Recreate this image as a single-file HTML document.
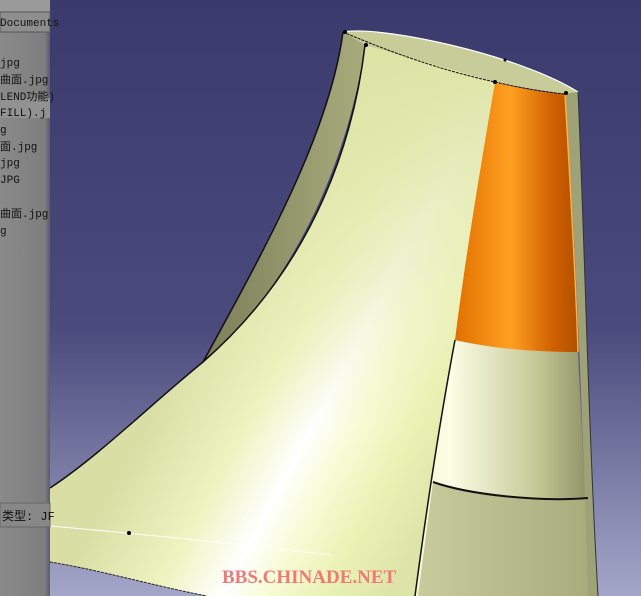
<!DOCTYPE html>
<html><head><meta charset="utf-8"><style>
html,body{margin:0;padding:0;width:641px;height:596px;overflow:hidden;background:#3c3c70}
.t{font-family:"Liberation Mono","WenQuanYi Zen Hei",monospace;font-size:11px;fill:#111}
</style></head><body>
<svg width="641" height="596" viewBox="0 0 641 596" xmlns="http://www.w3.org/2000/svg">
<defs>
<linearGradient id="bg" x1="0" y1="0" x2="0" y2="1">
<stop offset="0" stop-color="#3a3a6c"/><stop offset="0.55" stop-color="#4a4a7c"/><stop offset="1" stop-color="#a4a6c8"/></linearGradient>
<linearGradient id="front" gradientUnits="userSpaceOnUse" x1="160" y1="400" x2="420" y2="540">
<stop offset="0" stop-color="#d8dea4"/><stop offset="0.3" stop-color="#eef4c0"/><stop offset="0.5" stop-color="#ffffff"/><stop offset="0.62" stop-color="#f8fcd8"/><stop offset="0.8" stop-color="#eaf2b4"/><stop offset="1" stop-color="#dde4a8"/></linearGradient>
<linearGradient id="fade" gradientUnits="userSpaceOnUse" x1="0" y1="60" x2="0" y2="430">
<stop offset="0" stop-color="#dde4a6" stop-opacity="1"/><stop offset="0.55" stop-color="#e4eab0" stop-opacity="0.6"/><stop offset="1" stop-color="#e8eeb4" stop-opacity="0"/></linearGradient>
<linearGradient id="orange" x1="0" y1="0" x2="1" y2="0">
<stop offset="0" stop-color="#e07000"/><stop offset="0.45" stop-color="#ffa020"/><stop offset="0.8" stop-color="#d06000"/><stop offset="1" stop-color="#b05000"/></linearGradient>
<linearGradient id="cyl" x1="0" y1="0" x2="1" y2="0">
<stop offset="0" stop-color="#f4f8cc"/><stop offset="0.2" stop-color="#fcfee6"/><stop offset="0.7" stop-color="#c4c894"/><stop offset="1" stop-color="#8c9064"/></linearGradient>
<linearGradient id="cyl2" x1="0" y1="0" x2="1" y2="0">
<stop offset="0" stop-color="#c8cc9c"/><stop offset="1" stop-color="#a8ac7c"/></linearGradient>
<linearGradient id="back" x1="0" y1="0" x2="1" y2="0">
<stop offset="0" stop-color="#7c7e58"/><stop offset="1" stop-color="#a8ac7c"/></linearGradient>
<linearGradient id="panel" x1="0" y1="0" x2="1" y2="0">
<stop offset="0" stop-color="#8a8a8a"/><stop offset="0.9" stop-color="#7e7e7e"/><stop offset="1" stop-color="#5a5a6a"/></linearGradient>
</defs>
<rect width="641" height="596" fill="url(#bg)"/>
<path d="M343,32 C330,130 270,240 203,362 C300,280 350,150 365,45 Z" fill="url(#back)"/>
<path d="M343,32 C380,25 520,55 578,92 L565,94 C520,88 495,82 495,82 C430,68 390,52 365,45 Z" fill="#c8cc98"/>
<path d="M455,340 L578,352 L590,596 L415,596 C425,520 440,420 455,340 Z" fill="url(#cyl)"/>
<path d="M433,482 C470,495 540,502 588,498 L592,596 L418,596 Z" fill="url(#cyl2)"/>
<path d="M565,94 L578,92 C585,250 588,420 598,596 L588,596 C582,400 576,250 565,94 Z" fill="#9ea276"/>
<path d="M365,45 L495,82 C480,200 465,300 455,340 C440,420 425,520 415,596 L207,596 C150,585 100,570 50,562 L50,488 C100,455 150,405 203,362 C320,260 355,130 365,45 Z" fill="url(#front)"/>
<path d="M365,45 L495,82 C480,200 465,300 455,340 C440,420 425,520 415,596 L207,596 C150,585 100,570 50,562 L50,488 C100,455 150,405 203,362 C320,260 355,130 365,45 Z" fill="url(#fade)"/>
<path d="M495,82 C520,88 545,92 565,94 C570,180 576,280 578,352 C530,352 490,348 455,340 C465,260 480,170 495,82 Z" fill="url(#orange)"/>
<path d="M565,94 C570,180 576,280 578,352" stroke="#ffb040" stroke-width="1.5" fill="none"/>
<path d="M343,32 C380,25 520,55 578,92" stroke="#fff" stroke-width="1.2" fill="none"/>
<path d="M343,32 C390,52 440,70 495,82 C520,88 545,92 565,94" stroke="#111" stroke-width="1" stroke-dasharray="3,1" fill="none"/>
<path d="M343,32 C330,130 270,240 203,362" stroke="#111" stroke-width="1.5" fill="none"/>
<path d="M365,45 C355,130 320,260 203,362 C150,405 100,455 50,488" stroke="#111" stroke-width="1.5" fill="none"/>
<path d="M455,340 C440,420 425,520 415,596" stroke="#111" stroke-width="1.5" fill="none"/>
<path d="M578,92 C585,250 588,420 598,596" stroke="#333" stroke-width="1" fill="none"/>
<path d="M433,482 C470,495 540,502 588,498" stroke="#111" stroke-width="2" fill="none"/>
<path d="M50,562 C100,570 150,585 207,596" stroke="#222" stroke-width="1" stroke-dasharray="3,1" fill="none"/>
<path d="M50,526 C130,533 250,545 330,555" stroke="#fff" stroke-width="1" fill="none"/>
<circle cx="345" cy="32" r="2" fill="#000"/><circle cx="366" cy="45" r="2" fill="#000"/>
<circle cx="495" cy="82" r="2" fill="#000"/><circle cx="566" cy="93" r="2" fill="#000"/>
<circle cx="505" cy="60" r="1.5" fill="#000"/><circle cx="129" cy="533" r="2" fill="#000"/>
<rect x="0" y="0" width="50" height="596" fill="url(#panel)"/>
<rect x="0" y="0" width="50" height="12" fill="#9a9a9a"/>
<rect x="0" y="12" width="50" height="20" fill="#8e8e8e" stroke="#555" stroke-width="1"/>
<rect x="0" y="98" width="50" height="20" fill="#929292"/>
<text class="t" x="0" y="26">Documents</text>
<text class="t" x="0" y="66">jpg</text>
<text class="t" x="0" y="83">曲面.jpg</text>
<text class="t" x="0" y="100">LEND功能)</text>
<text class="t" x="0" y="116">FILL).j</text>
<text class="t" x="0" y="133">g</text>
<text class="t" x="0" y="150">面.jpg</text>
<text class="t" x="0" y="166">jpg</text>
<text class="t" x="0" y="183">JPG</text>
<text class="t" x="0" y="217">曲面.jpg</text>
<text class="t" x="0" y="234">g</text>
<rect x="0" y="503" width="50" height="24" fill="#888" stroke="#666"/>
<text class="t" x="2" y="520" style="font-size:12px">类型: JF</text>
<text x="222" y="583" style="font-family:'Liberation Serif',serif;font-size:19px;font-weight:bold;fill:#f07878">BBS.CHINADE.NET</text>
</svg>
</body></html>
